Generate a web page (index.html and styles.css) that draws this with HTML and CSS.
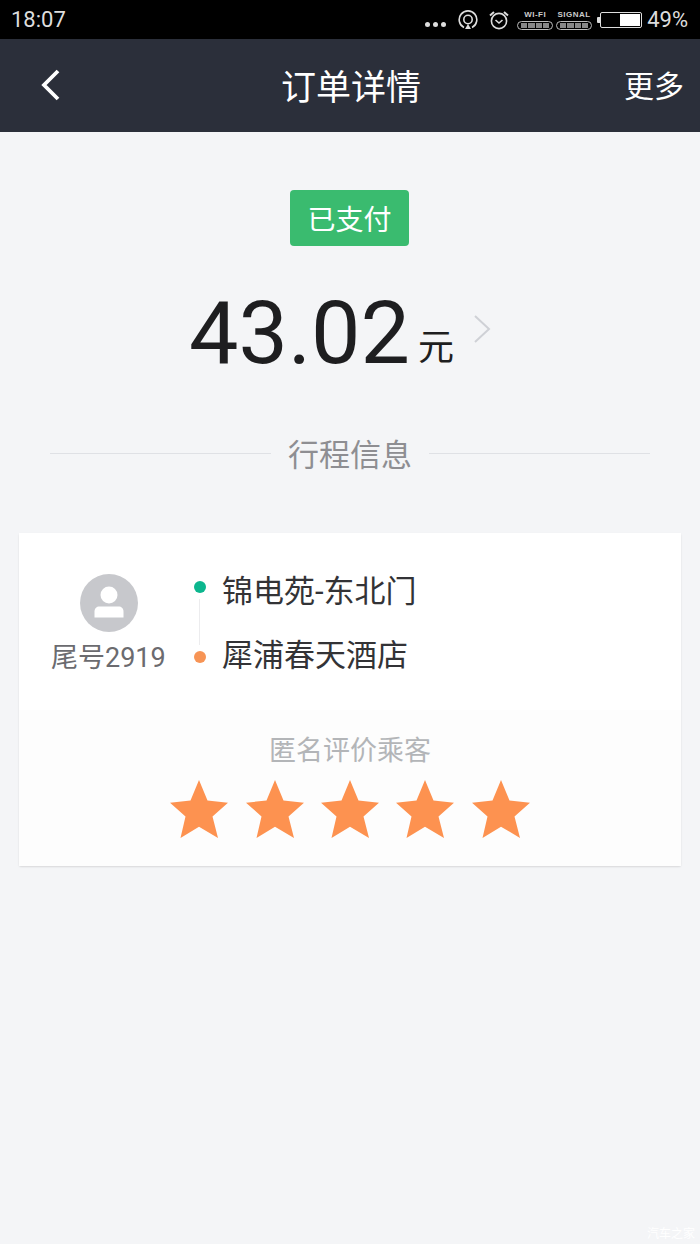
FILE: index.html
```html
<!DOCTYPE html>
<html lang="zh-CN">
<head>
    <meta charset="UTF-8">
    <meta name="viewport" content="width=device-width, initial-scale=1.0">
    <title>订单详情</title>
    <link rel="stylesheet" href="styles.css">
</head>
<body>
    <div class="status-bar">
        <span class="clock">18:07</span>
        <div class="status-right">
            <div class="dots"><i></i><i></i><i></i></div>
            <svg class="st-icon" width="20" height="20" viewBox="0 0 20 20" fill="none" stroke="#ddd" stroke-width="1.6">
                <path d="M6 17.500 A8.800 8.800 0 1 1 14 17.500"/>
                <circle cx="10" cy="9.500" r="4.200"/>
                <path d="M10 14l3 5H7z" fill="#ddd" stroke="none"/>
            </svg>
            <svg class="st-icon" width="22" height="20" viewBox="0 0 22 20" fill="none" stroke="#ddd" stroke-width="1.6">
                <circle cx="11" cy="11" r="7.600"/>
                <path d="M7.500 10l3.500 3 3.500-3"/>
                <path d="M2 5.500L6 2M20 5.500L16 2" stroke-width="2"/>
            </svg>
            <div class="net">
                <span class="net-label">WI-FI</span>
                <div class="net-bar"><i></i><i></i><i></i><i></i></div>
            </div>
            <div class="net">
                <span class="net-label">SIGNAL</span>
                <div class="net-bar"><i></i><i></i><i></i><i></i></div>
            </div>
            <div class="battery-nub"></div>
            <div class="battery"><div class="battery-fill"></div></div>
            <span class="percent">49%</span>
        </div>
    </div>

    <header class="nav">
        <svg class="back" width="24" height="34" viewBox="0 0 24 34" fill="none" stroke="#fff" stroke-width="3.800">
            <path d="M19 3L5 17l14 14"/>
        </svg>
        <h1>订单详情</h1>
        <span class="more">更多</span>
    </header>

    <main>
        <div class="summary">
            <div class="paid">已支付</div>
            <div class="price">
                <span class="amount">43.02</span>
                <span class="unit">元</span>
                <svg class="chevron" width="18" height="30" viewBox="0 0 18 30" fill="none" stroke="#cfd1d6" stroke-width="2">
                    <path d="M2 2l14 13L2 28"/>
                </svg>
            </div>
        </div>

        <div class="divider">
            <span class="line"></span>
            <span class="divider-text">行程信息</span>
            <span class="line"></span>
        </div>

        <section class="trip">
            <div class="trip-top">
                <div class="passenger">
                    <div class="avatar">
                        <svg width="58" height="58" viewBox="0 0 58 58" fill="#fff">
                            <circle cx="29" cy="21" r="8.500"/>
                            <path d="M14.500 43.500v-6c0-3 2-5 5-5h19c3 0 5 2 5 5v6z"/>
                        </svg>
                    </div>
                    <span class="tail">尾号2919</span>
                </div>
                <div class="route">
                    <div class="stop">
                        <i class="dot dot-start"></i>
                        <span>锦电苑-东北门</span>
                    </div>
                    <div class="stop">
                        <i class="dot dot-end"></i>
                        <span>犀浦春天酒店</span>
                    </div>
                </div>
            </div>
            <div class="rating">
                <div class="rating-title">匿名评价乘客</div>
                <div class="stars">
                    <svg width="58" height="58" viewBox="0 0 58 58"><path class="star" d="M29 0l8.500 20.500 20.500 2.200-15.500 13.800L48 58 29 46.700 10.500 58l5-21.500L0 22.700l20.500-2.200z"/></svg>
                    <svg width="58" height="58" viewBox="0 0 58 58"><path class="star" d="M29 0l8.500 20.500 20.500 2.200-15.500 13.800L48 58 29 46.700 10.500 58l5-21.500L0 22.700l20.500-2.200z"/></svg>
                    <svg width="58" height="58" viewBox="0 0 58 58"><path class="star" d="M29 0l8.500 20.500 20.500 2.200-15.500 13.800L48 58 29 46.700 10.500 58l5-21.500L0 22.700l20.500-2.200z"/></svg>
                    <svg width="58" height="58" viewBox="0 0 58 58"><path class="star" d="M29 0l8.500 20.500 20.500 2.200-15.500 13.800L48 58 29 46.700 10.500 58l5-21.500L0 22.700l20.500-2.200z"/></svg>
                    <svg width="58" height="58" viewBox="0 0 58 58"><path class="star" d="M29 0l8.500 20.500 20.500 2.200-15.500 13.800L48 58 29 46.700 10.500 58l5-21.500L0 22.700l20.500-2.200z"/></svg>
                </div>
            </div>
        </section>
    </main>

    <span class="watermark">汽车之家</span>
</body>
</html>
```

FILE: styles.css
```css
* {
    box-sizing: border-box;
}
html, body {
    height: 100%;
}
body {
    margin: 0;
    background-color: #f4f5f7;
    font-family: Roboto, "Noto Sans CJK SC", sans-serif;
    overflow: hidden;
}

/* status bar */
.status-bar {
    height: 39px;
    background-color: #000;
    color: #ddd;
    display: flex;
    align-items: center;
    justify-content: space-between;
    padding: 0 12px 0 11px;
}
.clock {
    font-size: 22px;
}
.status-right {
    display: flex;
    align-items: center;
}
.dots {
    display: flex;
    gap: 3px;
    margin-top: 9px;
    margin-right: 12px;
}
.dots i {
    width: 5px;
    height: 5px;
    border-radius: 50%;
    background-color: #ddd;
}
.st-icon {
    margin-right: 10px;
    flex-shrink: 0;
}
.st-icon + .st-icon {
    margin-right: 7px;
}
.net {
    width: 36px;
    margin-right: 3px;
    display: flex;
    flex-direction: column;
    align-items: center;
    gap: 2px;
}
.net-label {
    font-family: "Liberation Sans", sans-serif;
    font-size: 8px;
    line-height: 9px;
    font-weight: bold;
    letter-spacing: 0.5px;
    color: #ccc;
}
.net-bar {
    width: 36px;
    height: 9px;
    border: 1px solid #bbb;
    border-radius: 5px;
    display: flex;
    gap: 1px;
    padding: 1px 3px;
}
.net-bar i {
    flex: 1;
    background-color: #888;
}
.battery-nub {
    width: 3px;
    height: 6px;
    margin-left: 2px;
    background-color: #ddd;
    border-radius: 1px 0 0 1px;
}
.battery {
    width: 42px;
    height: 16px;
    border: 1px solid #ddd;
    border-radius: 2px;
    display: flex;
    justify-content: flex-end;
    padding: 1px;
    background-color: #000;
}
.battery-fill {
    width: 20px;
    background-color: #fff;
}
.percent {
    font-size: 22px;
    margin-left: 5px;
}

/* nav */
.nav {
    height: 93px;
    background-color: #2b2f3a;
    display: flex;
    align-items: center;
    justify-content: space-between;
    padding: 0 16px 0 39px;
    color: #fff;
}
.back {
    margin-top: -1px;
}
.nav h1 {
    margin: 0 0 2px 15px;
    font-size: 35px;
    font-weight: 400;
}
.more {
    font-size: 30px;
    margin-bottom: 3px;
}

/* amount */
.summary {
    display: flex;
    flex-direction: column;
    align-items: center;
    padding-top: 58px;
}
.paid {
    width: 119px;
    height: 56px;
    margin-right: 1px;
    background-color: #3abb6f;
    border-radius: 4px;
    color: #fff;
    font-size: 28px;
    display: flex;
    align-items: center;
    justify-content: center;
}
.price {
    display: flex;
    align-items: baseline;
    color: #1e1e20;
    height: 90px;
    margin-top: 42px;
    padding-right: 20px;
}
.amount {
    font-size: 88px;
    line-height: 90px;
}
.unit {
    font-size: 36px;
    margin-left: 8px;
    transform: translateY(-3px);
}
.chevron {
    margin-left: 19px;
    align-self: flex-start;
    margin-top: 26px;
}

.divider {
    display: flex;
    align-items: center;
    gap: 17px;
    padding: 0 50px;
    margin-top: 50px;
}
.line {
    flex: 1;
    height: 1px;
    background-color: #dfe1e5;
}
.divider-text {
    font-size: 31px;
    line-height: 44px;
    padding-top: 6px;
    color: #8e8e92;
}

/* trip card */
.trip {
    margin: 55px 19px 0;
    box-shadow: 0 1px 2px rgba(0, 0, 0, 0.12);
    border-radius: 2px;
}
.trip-top {
    height: 177px;
    background-color: #fff;
    display: flex;
}
.passenger {
    width: 180px;
    padding-left: 32px;
    display: flex;
    flex-direction: column;
    align-items: flex-start;
    padding-top: 41px;
}
.avatar {
    width: 58px;
    height: 58px;
    border-radius: 50%;
    background-color: #c7c8cc;
    margin-left: 29px;
}
.tail {
    font-size: 27px;
    line-height: 36px;
    color: #6b6b6f;
    margin-top: 8px;
    white-space: nowrap;
}
.route {
    position: relative;
    padding-top: 33px;
    display: flex;
    flex-direction: column;
    gap: 20px;
}
.stop {
    display: flex;
    align-items: center;
    height: 44px;
    font-size: 31px;
    color: #333336;
}
.dot {
    width: 12px;
    height: 12px;
    border-radius: 50%;
    margin-left: -5px;
    margin-right: 16px;
    position: relative;
}
.dot-start {
    background-color: #0cb68e;
    margin-top: -2px;
}
.dot-end {
    background-color: #f79455;
    margin-top: 10px;
}
.dot-start::after {
    content: "";
    position: absolute;
    left: 5px;
    top: 18px;
    width: 1px;
    height: 46px;
    background-color: #ececee;
}

.rating {
    height: 156px;
    background-color: #fdfdfd;
    text-align: center;
    padding-top: 21px;
}
.rating-title {
    font-size: 27px;
    line-height: 40px;
    color: #b3b5b8;
}
.stars {
    display: flex;
    justify-content: center;
    gap: 17.400px;
    margin-top: 9px;
}
.star {
    fill: #fd9250;
}

.watermark {
    position: absolute;
    right: 5px;
    bottom: 3px;
    font-size: 12px;
    color: #fff;
}
```
